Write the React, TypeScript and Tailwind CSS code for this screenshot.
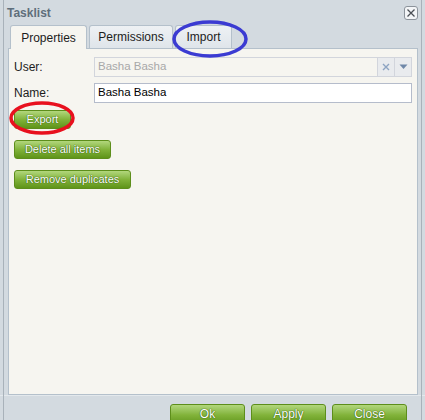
import React from "react";

const font = { fontFamily: '"Liberation Sans", Arial, sans-serif' };

function GreenButton({ label, className = "" }: { label: string; className?: string }) {
  return (
    <button
      className={`flex h-[19px] shrink-0 rounded-[3px] border border-[#5d8e1b] bg-gradient-to-b from-[#b2d77c] via-[#82b33a] to-[#5f9418] text-[11px] leading-none text-white [text-shadow:0_0_1px_#2f5a08,0_0_1px_#2f5a08] ${className}`}
    >
      {label}
    </button>
  );
}

function Tab({ label, active, width }: { label: string; active?: boolean; width: string }) {
  return (
    <div
      className={`relative flex items-center justify-center rounded-t-[3px] border border-b-0 border-[#b4c0cb] text-[12px] text-[#1c1c1c] ${width} ${
        active ? "top-[1px] -mt-px h-[24px] bg-[#f6f5f0]" : "h-[23px] bg-gradient-to-b from-[#eef1f4] to-[#dfe5ea]"
      }`}
    >
      {label}
    </div>
  );
}

export default function App() {
  return (
    <div className="relative h-[420px] w-[425px] overflow-hidden bg-[#d3dae0]" style={font}>
      {/* window edges */}
      <div className="absolute left-[3px] top-0 h-full w-px bg-[#a9b2ba]" />
      <div className="absolute right-[3px] top-0 h-full w-px bg-[#a9b2ba]" />

      <div className="flex h-full flex-col">
        {/* Title bar */}
        <div className="flex h-[25px] shrink-0 items-center justify-between pl-[7px] pr-[7px]">
          <span className="text-[12px] font-bold text-[#5f6e7b]">Tasklist</span>
          <button className="flex h-[14px] w-[14px] items-center justify-center rounded-[3px] border border-[#8c939b] bg-[#f3f5f7]">
            <svg width="10" height="10" viewBox="0 0 10 10">
              <path d="M1.5 1.5 L8.5 8.5 M8.5 1.5 L1.5 8.5" stroke="#4a4f55" strokeWidth="1.3" />
            </svg>
          </button>
        </div>

        {/* Tabs */}
        <div className="ml-[8px] mr-[7px] flex h-[24px] shrink-0 items-end gap-[2px] border-b border-[#b4c0cb] pl-[2px]">
          <Tab label="Properties" active width="w-[77px]" />
          <Tab label="Permissions" width="w-[84px]" />
          <Tab label="Import" width="w-[57px]" />
        </div>

        {/* Body */}
        <div className="ml-[8px] mr-[7px] flex h-[346px] shrink-0 flex-col border border-t-0 border-[#b4c0cb] bg-[#f6f5f0] px-[5px] pt-[8px] text-[12px] text-[#1c1c1c]">
          <div className="flex h-[20px] items-center">
            <span className="w-[80px]">User:</span>
            <div className="flex h-[20px] flex-1 items-stretch border border-[#d2d5dc] bg-[#f6f5f0]">
              <span className="flex flex-1 items-center pl-[3px] text-[11.5px] text-[#a8a8a8]">Basha Basha</span>
              <div className="flex w-[17px] items-center justify-center border-l border-[#d2d5dc] bg-[#e9ebee]">
                <svg width="8" height="8" viewBox="0 0 8 8">
                  <path d="M1 1 L7 7 M7 1 L1 7" stroke="#8da4c2" strokeWidth="1.4" />
                </svg>
              </div>
              <div className="flex w-[17px] items-center justify-center border-l border-[#d2d5dc] bg-[#e9ebee]">
                <svg width="9" height="6" viewBox="0 0 9 6">
                  <path d="M0.5 0.5 L4.5 5 L8.5 0.5 Z" fill="#6f87a8" />
                </svg>
              </div>
            </div>
          </div>

          <div className="mt-[6px] flex h-[20px] items-center">
            <span className="w-[80px]">Name:</span>
            <div className="flex h-[20px] flex-1 items-center border border-[#b5bccb] bg-white pl-[3px] text-[11.5px] text-black">
              Basha Basha
            </div>
          </div>

          <div className="mt-[7px] flex flex-col items-start gap-[11px]">
            <GreenButton label="Export" className="w-[57px] items-center justify-center" />
            <GreenButton label="Delete all items" className="w-[97px] items-center justify-center" />
            <GreenButton label="Remove duplicates" className="w-[117px] items-center justify-center" />
          </div>
        </div>

        {/* Footer */}
        <div className="flex h-[30px] shrink-0 items-start justify-end gap-[6px] border-t border-[#e3e8ec] pr-[18px] pt-[8px]">
          <GreenButton label="Ok" className="h-[22px] w-[75px] items-start justify-center pt-[3px] text-[12px] leading-[12px]" />
          <GreenButton label="Apply" className="h-[22px] w-[75px] items-start justify-center pt-[3px] text-[12px] leading-[12px]" />
          <GreenButton label="Close" className="h-[22px] w-[75px] items-start justify-center pt-[3px] text-[12px] leading-[12px]" />
        </div>
      </div>

      {/* Annotations */}
      <svg className="pointer-events-none absolute left-0 top-0" width="425" height="420">
        <ellipse cx="210" cy="39" rx="36" ry="17" fill="none" stroke="#3b3bd2" strokeWidth="3.5" />
        <ellipse cx="42" cy="118" rx="31" ry="15" fill="none" stroke="#e8101e" strokeWidth="3.5" />
      </svg>
    </div>
  );
}
